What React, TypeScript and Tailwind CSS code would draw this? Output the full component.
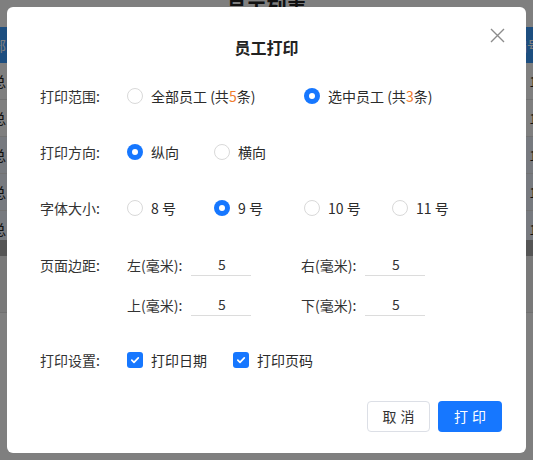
import { useState } from 'react';

const FONT = { fontFamily: '"Noto Sans CJK SC", "Noto Sans", sans-serif' };

function Radio({ checked, label, width, onClick }: { checked: boolean; label: React.ReactNode; width: string; onClick: () => void }) {
  return (
    <button onClick={onClick} className={`flex items-center gap-2 ${width} text-left`}>
      {checked ? (
        <span className="w-4 h-4 rounded-full bg-[#1677ff] flex items-center justify-center shrink-0">
          <span className="w-[6px] h-[6px] rounded-full bg-white" />
        </span>
      ) : (
        <span className="w-4 h-4 rounded-full border border-[#d9d9d9] bg-white shrink-0" />
      )}
      <span className="text-[14px] text-[#2b2b2b]">{label}</span>
    </button>
  );
}

function Check({ checked, label, onClick }: { checked: boolean; label: string; onClick: () => void }) {
  return (
    <button onClick={onClick} className="flex items-center gap-2 w-[106px] text-left">
      <span
        className={`w-4 h-4 rounded-[3px] flex items-center justify-center shrink-0 ${
          checked ? 'bg-[#1677ff]' : 'border border-[#d9d9d9] bg-white'
        }`}
      >
        {checked && (
          <svg width="10" height="10" viewBox="0 0 10 10" fill="none">
            <path d="M1.8 5.2 L4 7.3 L8.3 2.8" stroke="white" strokeWidth="1.7" strokeLinecap="round" strokeLinejoin="round" />
          </svg>
        )}
      </span>
      <span className="text-[14px] text-[#2b2b2b]">{label}</span>
    </button>
  );
}

function MarginInput({ label, value }: { label: string; value: string }) {
  return (
    <div className="flex items-center w-[174px]">
      <span className="w-[64px] text-[14px] text-[#333]">{label}</span>
      <div className="w-[60px] h-[22px] border-b border-[#dcdcdc] flex items-start justify-center text-[14px] text-[#333] leading-[20px] pl-[2px]">
        {value}
      </div>
    </div>
  );
}

const TABLE_ROWS = ['bg-white', 'bg-white', 'bg-[#eef4ff]', 'bg-[#eef4ff]', 'bg-[#eef4ff]'];

export default function App() {
  const [range, setRange] = useState('selected');
  const [dir, setDir] = useState('portrait');
  const [size, setSize] = useState('9');
  const [printDate, setPrintDate] = useState(true);
  const [printPage, setPrintPage] = useState(true);

  return (
    <div className="relative h-[460px] w-[533px] overflow-hidden bg-white" style={FONT}>
      {/* Page behind the dialog */}
      <div className="h-[27px] flex justify-center">
        <h1 className="text-[20px] font-bold text-[#222] -mt-[6px]">员工列表</h1>
      </div>
      <div className="h-9 bg-[#3b9cff] flex items-center justify-between text-white text-[14px]">
        <span className="-ml-[8px]">部门</span>
        <span className="-mr-[8px]">编号</span>
      </div>
      {TABLE_ROWS.map((bg, i) => (
        <div key={i} className={`h-[37px] ${bg} border-b border-[#e5e5e5] flex items-center justify-between text-[14px] text-[#222]`}>
          <span className="-ml-[8px]">总</span>
          <span className="-mr-[4px]">1</span>
        </div>
      ))}
      <div className="h-4 bg-[#aaaaaa] -mt-[8px]" />
      <div className="h-[57px] bg-[#f2f2f2] border-b border-[#e0e0e0]" />

      {/* Overlay */}
      <div className="absolute inset-0 bg-black/50 p-[7px] flex">
        <div className="flex-1 bg-white rounded-[6px] flex flex-col px-[33px] pt-[28px] pb-[21px] relative">
          <button className="absolute right-[21px] top-[21px] text-[#8c8c8c]">
            <svg width="15" height="15" viewBox="0 0 15 15" fill="none">
              <path d="M1 1 L14 14 M14 1 L1 14" stroke="currentColor" strokeWidth="1.4" />
            </svg>
          </button>
          <h2 className="text-center text-[16px] leading-6 font-bold text-[#222]">员工打印</h2>

          <div className="flex items-center h-8 mt-[21px]">
            <span className="w-[87px] text-[14px] text-[#333]">打印范围:</span>
            <Radio
              width="w-[177px]"
              checked={range === 'all'}
              onClick={() => setRange('all')}
              label={
                <>
                  全部员工 (共<span className="text-[#f07c2e]">5</span>条)
                </>
              }
            />
            <Radio
              width="w-[177px]"
              checked={range === 'selected'}
              onClick={() => setRange('selected')}
              label={
                <>
                  选中员工 (共<span className="text-[#f07c2e]">3</span>条)
                </>
              }
            />
          </div>

          <div className="flex items-center h-8 mt-[24px]">
            <span className="w-[87px] text-[14px] text-[#333]">打印方向:</span>
            <Radio width="w-[87px]" checked={dir === 'portrait'} onClick={() => setDir('portrait')} label="纵向" />
            <Radio width="w-[87px]" checked={dir === 'landscape'} onClick={() => setDir('landscape')} label="横向" />
          </div>

          <div className="flex items-center h-8 mt-[24px]">
            <span className="w-[87px] text-[14px] text-[#333]">字体大小:</span>
            <Radio width="w-[87px]" checked={size === '8'} onClick={() => setSize('8')} label="8 号" />
            <Radio width="w-[90px]" checked={size === '9'} onClick={() => setSize('9')} label="9 号" />
            <Radio width="w-[88px]" checked={size === '10'} onClick={() => setSize('10')} label="10 号" />
            <Radio width="w-[88px]" checked={size === '11'} onClick={() => setSize('11')} label="11 号" />
          </div>

          <div className="flex items-center h-8 mt-[25px]">
            <span className="w-[87px] text-[14px] text-[#333]">页面边距:</span>
            <MarginInput label="左(毫米):" value="5" />
            <MarginInput label="右(毫米):" value="5" />
          </div>
          <div className="flex items-center h-8 mt-[8px]">
            <span className="w-[87px]" />
            <MarginInput label="上(毫米):" value="5" />
            <MarginInput label="下(毫米):" value="5" />
          </div>

          <div className="flex items-center h-8 mt-[23px]">
            <span className="w-[87px] text-[14px] text-[#333]">打印设置:</span>
            <Check checked={printDate} onClick={() => setPrintDate((v) => !v)} label="打印日期" />
            <Check checked={printPage} onClick={() => setPrintPage((v) => !v)} label="打印页码" />
          </div>

          <div className="flex justify-end gap-2 mt-auto -mr-[9px]">
            <button className="w-[63px] h-[31px] rounded-[4px] border border-[#dcdfe6] bg-white text-[14px] text-[#333] tracking-[4px] pl-[4px]">
              取消
            </button>
            <button className="w-[64px] h-[31px] rounded-[4px] bg-[#1677ff] text-[14px] text-white tracking-[4px] pl-[4px]">
              打印
            </button>
          </div>
        </div>
      </div>
    </div>
  );
}
